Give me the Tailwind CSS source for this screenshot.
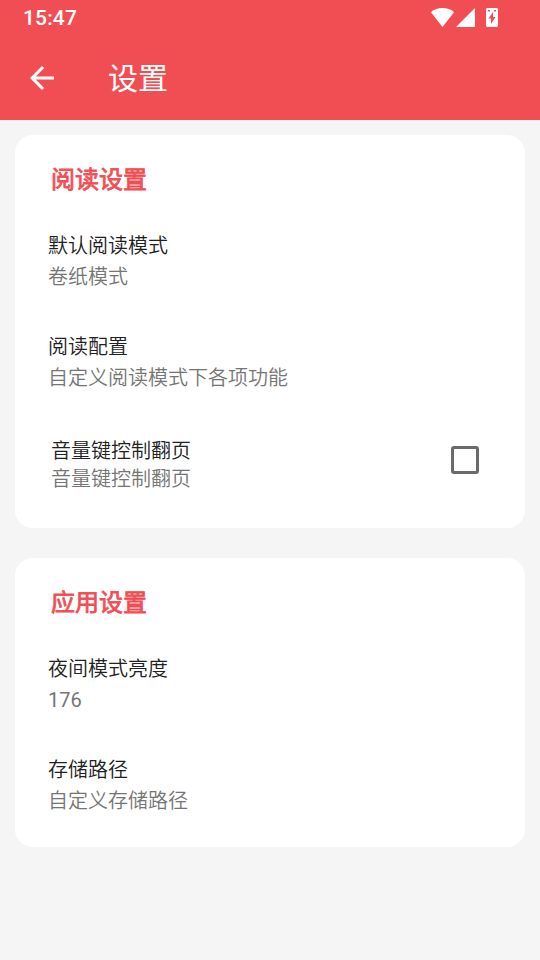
<!DOCTYPE html>
<html lang="zh-CN">
<head>
<meta charset="utf-8">
<title>设置</title>
<script src="https://cdn.jsdelivr.net/npm/@tailwindcss/browser@4"></script>
</head>
<body class="w-[540px] h-[960px] overflow-hidden bg-[#f5f5f5] font-[Roboto,'Noto_Sans_CJK_SC',sans-serif]">
<header class="h-[120px] bg-[#f14e54] text-white">
  <div class="flex h-9 items-center justify-between pl-[23px] pr-[42px]">
    <span class="text-[21px] leading-9 font-medium tracking-[0.15px]">15:47</span>
    <div class="flex items-center pb-px">
      <svg class="w-[23px] h-[19px]" viewBox="0 0 23 19" fill="currentColor"><path d="M11.5 19 0 4.3C6-1.3 17-1.3 23 4.3Z"/></svg>
      <svg class="ml-[2px] w-[19px] h-[19px]" viewBox="0 0 19 19" fill="currentColor"><path d="M19 0v19H0Z"/></svg>
      <svg class="ml-[11px] w-[12px] h-[19px]" viewBox="0 0 12 19"><path fill="currentColor" d="M1 0h10l1 1v17l-1 1H1l-1-1V1Z"/><path fill="#f14e54" d="M2 2h2v1.500H2ZM8 2h2v1.500H8ZM7 4v5h2.500L5 16v-5.500H2.500Z"/></svg>
    </div>
  </div>
  <div class="flex h-[84px] items-center pl-[30px]">
    <svg class="w-6 h-6" viewBox="4 4 16 16" fill="currentColor"><path d="M20 11H7.83l5.59-5.59L12 4l-8 8 8 8 1.41-1.41L7.83 13H20v-2z"/></svg>
    <h1 class="ml-[54px] mt-[2px] text-[30px] leading-10 font-normal">设置</h1>
  </div>
</header>
<main class="flex flex-col gap-[30px] p-[15px]">
  <section class="h-[393px] rounded-[18px] bg-white pl-[33px] pt-[27px]">
    <h2 class="pl-[3px] text-[24px] leading-9 font-normal [-webkit-text-stroke:0.8px_#f14e54] text-[#f14e54]">阅读设置</h2>
    <div class="mt-[33px] text-[20px] font-[350]">
      <p class="leading-[30px] text-[#212121]">默认阅读模式</p>
      <p class="leading-[32px] text-[#757575]">卷纸模式</p>
    </div>
    <div class="mt-[39px] text-[20px] font-[350]">
      <p class="leading-[30px] text-[#212121]">阅读配置</p>
      <p class="leading-[32px] text-[#757575]">自定义阅读模式下各项功能</p>
    </div>
    <div class="mt-[43px] flex items-start justify-between pl-[3px] pr-[46px] text-[20px] font-[350]">
      <div>
        <p class="leading-[29px] text-[#212121]">音量键控制翻页</p>
        <p class="leading-[27px] text-[#757575]">音量键控制翻页</p>
      </div>
      <span class="mt-[9px] h-7 w-7 rounded-[3px] border-3 border-[#6b6b6b]"></span>
    </div>
  </section>
  <section class="h-[289px] rounded-[18px] bg-white pl-[33px] pt-[27px]">
    <h2 class="pl-[3px] text-[24px] leading-9 font-normal [-webkit-text-stroke:0.8px_#f14e54] text-[#f14e54]">应用设置</h2>
    <div class="mt-[33px] text-[20px] font-[350]">
      <p class="leading-[30px] text-[#212121]">夜间模式亮度</p>
      <p class="leading-[32px] font-normal text-[#757575]">176</p>
    </div>
    <div class="mt-[39px] text-[20px] font-[350]">
      <p class="leading-[30px] text-[#212121]">存储路径</p>
      <p class="leading-[32px] text-[#757575]">自定义存储路径</p>
    </div>
  </section>
</main>
</body>
</html>
